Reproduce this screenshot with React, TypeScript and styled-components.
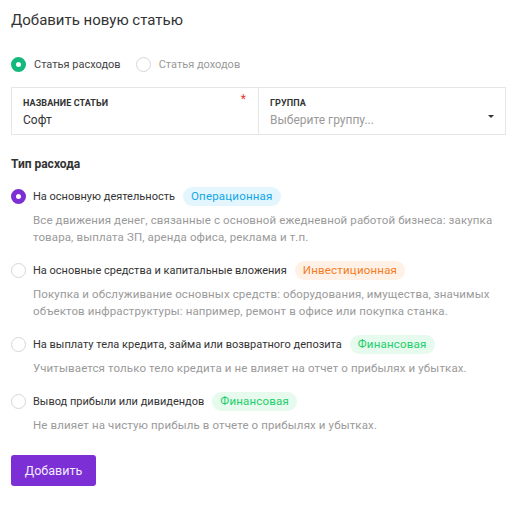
import React, { useState } from "react";
import styled, { createGlobalStyle } from "styled-components";

const Global = createGlobalStyle`
  html, body { margin: 0; padding: 0; background: #fff; }
  body { font-family: Roboto, "Noto Sans", sans-serif; color: #333; }
  * { box-sizing: border-box; }
`;

const Page = styled.div`
  width: 521px;
  padding: 9px 15px 20px 11px;
  display: flex;
  flex-direction: column;
`;

const Title = styled.h1`
  margin: 0;
  font-size: 15px;
  font-weight: 400;
  line-height: 22px;
  color: #333;
`;

const Tabs = styled.div`
  display: flex;
  gap: 15px;
  margin-top: 26px;
  align-items: center;
`;

const TabItem = styled.label<{ $active?: boolean }>`
  display: flex;
  align-items: center;
  gap: 8px;
  font-size: 11px;
  color: ${(p) => (p.$active ? "#444" : "#999")};
  cursor: pointer;
`;

const Radio = styled.span<{ $checked?: boolean; $color?: string }>`
  width: 15px;
  height: 15px;
  border-radius: 50%;
  flex-shrink: 0;
  border: ${(p) => (p.$checked ? `5px solid ${p.$color}` : "1px solid #d6d6d6")};
  background: #fff;
`;

const Fields = styled.div`
  margin-top: 15px;
  display: grid;
  grid-template-columns: 246px 1fr;
  border: 1px solid #e6e6e6;
  height: 48px;
`;

const Field = styled.div<{ $divider?: boolean }>`
  position: relative;
  padding: 9px 11px 0 11px;
  border-left: ${(p) => (p.$divider ? "1px solid #e6e6e6" : "none")};
  display: flex;
  flex-direction: column;
`;

const FieldLabel = styled.div`
  font-size: 9px;
  font-weight: 700;
  color: #333;
  line-height: 12px;
  letter-spacing: 0.1px;
`;

const FieldValue = styled.div<{ $placeholder?: boolean }>`
  font-size: 12px;
  line-height: 18px;
  margin-top: 2px;
  color: ${(p) => (p.$placeholder ? "#999" : "#333")};
`;

const Required = styled.span`
  position: absolute;
  top: 4px;
  right: 12px;
  color: #e53935;
  font-size: 12px;
`;

const Caret = styled.span`
  position: absolute;
  right: 11px;
  top: 27px;
  width: 0;
  height: 0;
  border-left: 3.5px solid transparent;
  border-right: 3.5px solid transparent;
  border-top: 3.5px solid #333;
`;

const Section = styled.div`
  margin-top: 20px;
  font-size: 12px;
  font-weight: 700;
  color: #333;
  line-height: 18px;
`;

const Options = styled.div`
  display: flex;
  flex-direction: column;
  gap: 14px;
  margin-top: 13px;
`;

const Option = styled.div`
  display: flex;
  flex-direction: column;
`;

const OptionHead = styled.label`
  display: flex;
  align-items: center;
  gap: 7px;
  height: 20px;
  font-size: 11px;
  color: #333;
  cursor: pointer;
`;

const Badge = styled.span<{ $bg: string; $fg: string }>`
  margin-left: 1px;
  padding: 0 8px;
  height: 19px;
  line-height: 19px;
  border-radius: 10px;
  background: ${(p) => p.$bg};
  color: ${(p) => p.$fg};
  font-size: 11.5px;
  letter-spacing: 0.2px;
`;

const Desc = styled.div`
  margin-top: 6px;
  padding-left: 22px;
  font-size: 11.5px;
  line-height: 17px;
  letter-spacing: 0.12px;
  color: #9a9a9a;
`;

const Button = styled.button`
  margin-top: 21px;
  align-self: flex-start;
  width: 85px;
  height: 31px;
  border: none;
  border-radius: 3px;
  background: #7b2fd4;
  color: #f3ecff;
  font-family: inherit;
  font-size: 12.5px;
  cursor: pointer;
`;

const kinds = {
  op: { label: "Операционная", bg: "#e3f6fd", fg: "#12a6e8" },
  inv: { label: "Инвестиционная", bg: "#fff1e6", fg: "#f57c1f" },
  fin: { label: "Финансовая", bg: "#e6faee", fg: "#1ccf6a" },
};

const options = [
  {
    title: "На основную деятельность",
    kind: kinds.op,
    desc: "Все движения денег, связанные с основной ежедневной работой бизнеса: закупка товара, выплата ЗП, аренда офиса, реклама и т.п.",
  },
  {
    title: "На основные средства и капитальные вложения",
    kind: kinds.inv,
    desc: "Покупка и обслуживание основных средств: оборудования, имущества, значимых объектов инфраструктуры: например, ремонт в офисе или покупка станка.",
  },
  {
    title: "На выплату тела кредита, займа или возвратного депозита",
    kind: kinds.fin,
    desc: "Учитывается только тело кредита и не влияет на отчет о прибылях и убытках.",
  },
  {
    title: "Вывод прибыли или дивидендов",
    kind: kinds.fin,
    desc: "Не влияет на чистую прибыль в отчете о прибылях и убытках.",
  },
];

export default function App() {
  const [tab, setTab] = useState(0);
  const [sel, setSel] = useState(0);
  return (
    <>
      <Global />
      <Page>
        <Title>Добавить новую статью</Title>
        <Tabs>
          <TabItem $active={tab === 0} onClick={() => setTab(0)}>
            <Radio $checked={tab === 0} $color="#13b97c" />
            Статья расходов
          </TabItem>
          <TabItem $active={tab === 1} onClick={() => setTab(1)}>
            <Radio $checked={tab === 1} $color="#13b97c" />
            Статья доходов
          </TabItem>
        </Tabs>
        <Fields>
          <Field>
            <FieldLabel>НАЗВАНИЕ СТАТЬИ</FieldLabel>
            <FieldValue>Софт</FieldValue>
            <Required>*</Required>
          </Field>
          <Field $divider>
            <FieldLabel>ГРУППА</FieldLabel>
            <FieldValue $placeholder>Выберите группу...</FieldValue>
            <Caret />
          </Field>
        </Fields>
        <Section>Тип расхода</Section>
        <Options>
          {options.map((o, i) => (
            <Option key={i}>
              <OptionHead onClick={() => setSel(i)}>
                <Radio $checked={sel === i} $color="#7b2fd4" />
                {o.title}
                <Badge $bg={o.kind.bg} $fg={o.kind.fg}>
                  {o.kind.label}
                </Badge>
              </OptionHead>
              <Desc>{o.desc}</Desc>
            </Option>
          ))}
        </Options>
        <Button>Добавить</Button>
      </Page>
    </>
  );
}
